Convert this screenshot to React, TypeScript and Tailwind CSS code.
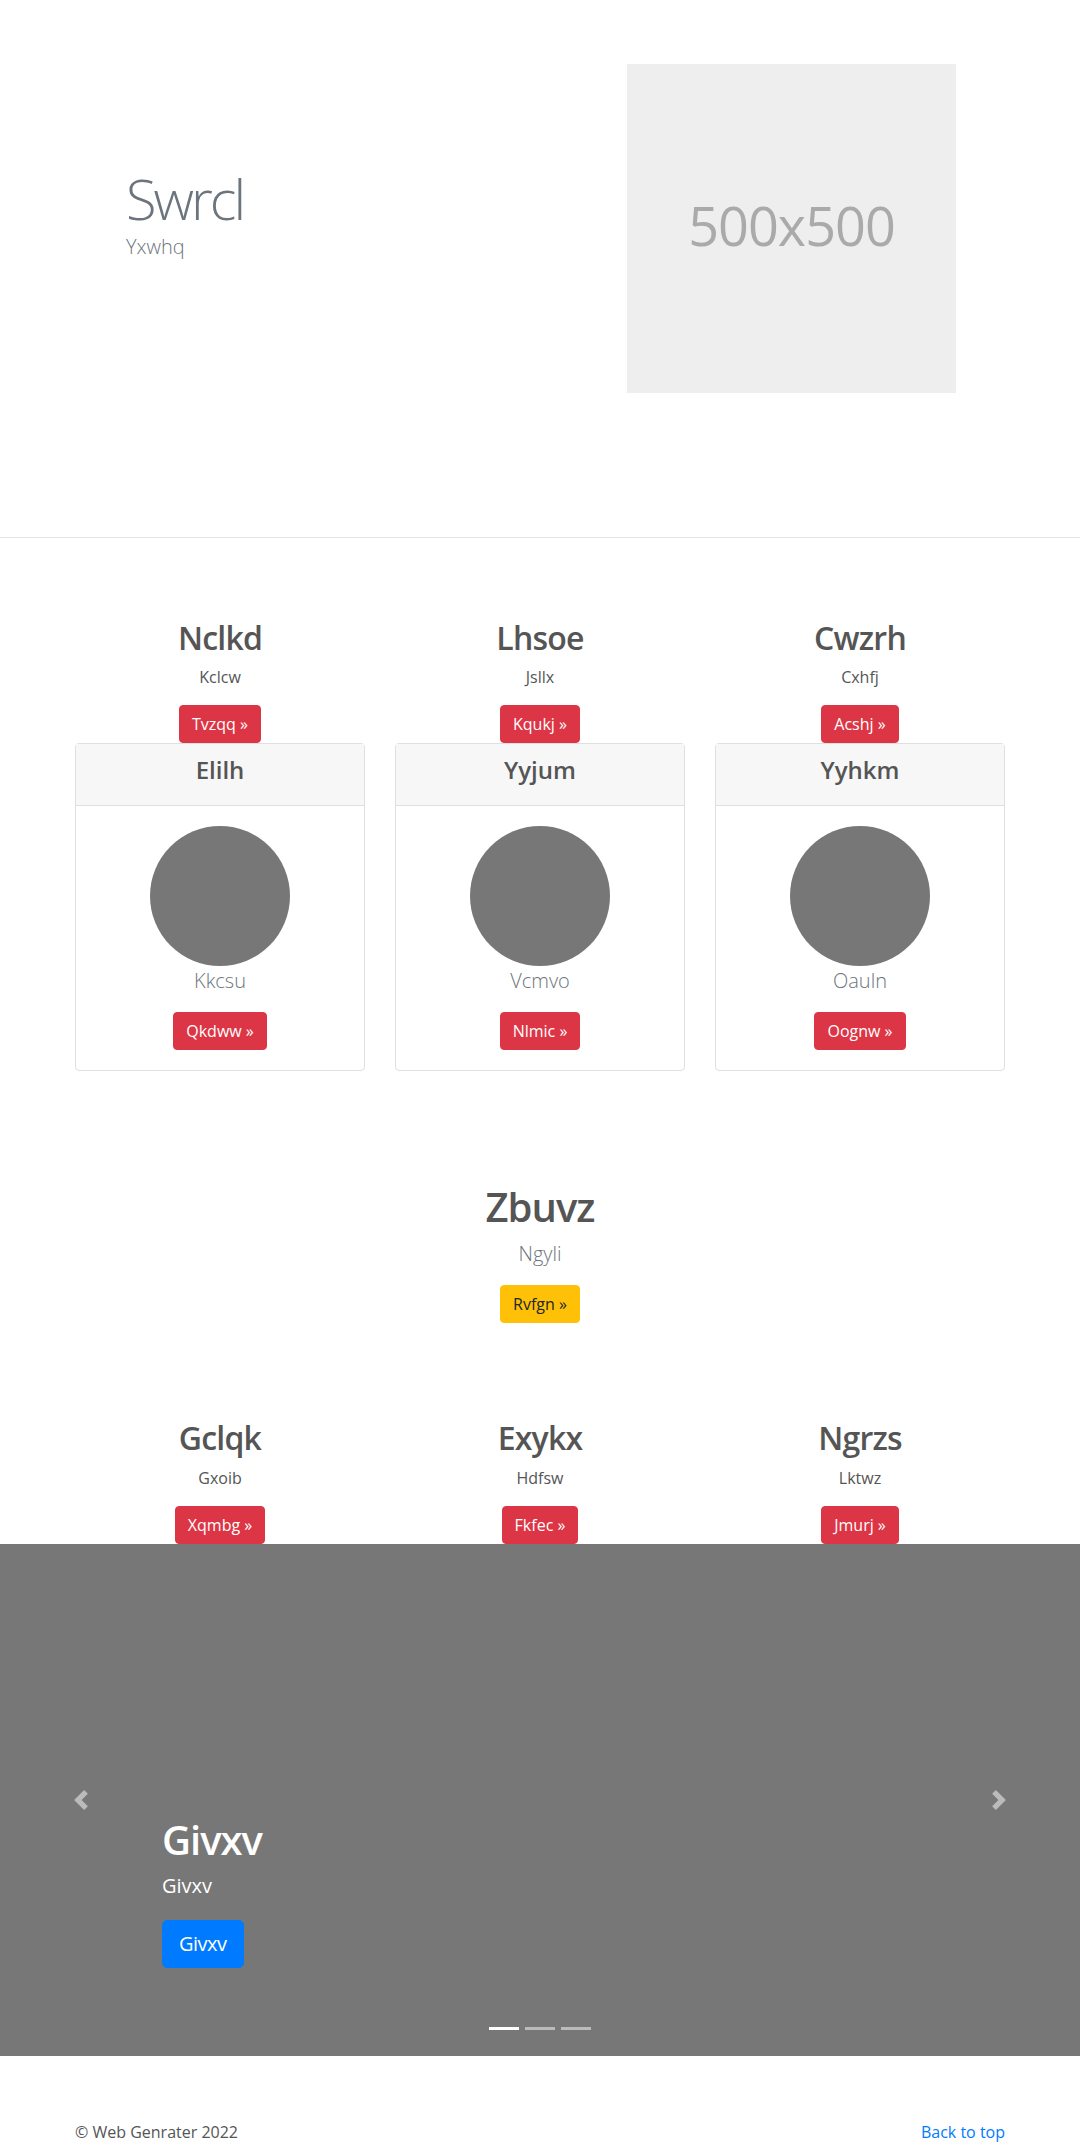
const topFeatures = [
  { title: 'Nclkd', text: 'Kclcw', btn: 'Tvzqq', card: 'Elilh', lead: 'Kkcsu', cardBtn: 'Qkdww' },
  { title: 'Lhsoe', text: 'Jsllx', btn: 'Kqukj', card: 'Yyjum', lead: 'Vcmvo', cardBtn: 'Nlmic' },
  { title: 'Cwzrh', text: 'Cxhfj', btn: 'Acshj', card: 'Yyhkm', lead: 'Oauln', cardBtn: 'Oognw' },
];

const bottomFeatures = [
  { title: 'Gclqk', text: 'Gxoib', btn: 'Xqmbg' },
  { title: 'Exykx', text: 'Hdfsw', btn: 'Fkfec' },
  { title: 'Ngrzs', text: 'Lktwz', btn: 'Jmurj' },
];

function RedButton({ label }: { label: string }) {
  return (
    <a
      href="#"
      className="inline-block rounded border border-[#dc3545] bg-[#dc3545] px-3 py-1.5 text-base leading-6 text-white"
    >
      {label} »
    </a>
  );
}

function Feature({ title, text, btn }: { title: string; text: string; btn: string }) {
  return (
    <div className="text-center">
      <h2 className="mb-2 text-[32px] font-semibold leading-[1.2] tracking-tight text-[#555]">{title}</h2>
      <p className="mb-4 text-base leading-6 text-[#555]">{text}</p>
      <div>
        <RedButton label={btn} />
      </div>
    </div>
  );
}

export default function App() {
  return (
    <div className="bg-white font-['Open_Sans','Noto_Sans',sans-serif] text-[#212529]">
      {/* Hero */}
      <section className="border-b border-[#e5e5e5] pt-16 pb-[144px]">
        <div className="mx-auto flex w-[930px] items-start">
          <div className="w-[552px] pl-[51px] pt-[101px]">
            <h1 className="text-[56px] font-light leading-[1.2] tracking-[-3px] text-[#6c757d]">Swrcl</h1>
            <p className="text-xl font-light leading-[1.5] text-[#6c757d]">Yxwhq</p>
          </div>
          <div className="flex h-[329px] w-[329px] items-center justify-center bg-[#eee] pb-2">
            <span className="text-[54px] leading-none tracking-[-1px] text-[#aaa]">500x500</span>
          </div>
        </div>
      </section>

      {/* Features with cards */}
      <section className="mx-auto grid w-[930px] grid-cols-3 gap-x-[30px] pt-[81px]">
        {topFeatures.map((f) => (
          <div key={f.title}>
            <Feature title={f.title} text={f.text} btn={f.btn} />
            <div className="rounded border border-[#dfdfdf] text-center">
              <div className="border-b border-[#dfdfdf] bg-[#f7f7f7] px-5 pt-3 pb-5">
                <h4 className="text-2xl font-semibold leading-[1.2] text-[#555]">{f.card}</h4>
              </div>
              <div className="p-5">
                <div className="mx-auto h-[140px] w-[140px] rounded-full bg-[#777]" />
                <p className="mb-4 text-xl font-light leading-[1.5] text-[#6c757d]">{f.lead}</p>
                <RedButton label={f.cardBtn} />
              </div>
            </div>
          </div>
        ))}
      </section>

      {/* Centered call to action */}
      <section className="pt-[112px] text-center">
        <h1 className="mb-2 text-[40px] font-semibold leading-[1.2] tracking-tight text-[#555]">Zbuvz</h1>
        <p className="mb-4 text-xl font-light leading-[1.5] text-[#6c757d]">Ngyli</p>
        <a
          href="#"
          className="inline-block rounded border border-[#ffc107] bg-[#ffc107] px-3 py-1.5 text-base leading-6 text-[#212529]"
        >
          Rvfgn »
        </a>
      </section>

      {/* Second feature row */}
      <section className="mx-auto grid w-[930px] grid-cols-3 gap-x-[30px] pt-24">
        {bottomFeatures.map((f) => (
          <Feature key={f.title} title={f.title} text={f.text} btn={f.btn} />
        ))}
      </section>

      {/* Carousel */}
      <section className="relative h-[512px] bg-[#777]">
        <a href="#" className="absolute inset-y-0 left-0 flex w-[15%] items-center justify-center opacity-50">
          <svg width="20" height="20" viewBox="0 0 8 8" fill="#fff">
            <path d="M5.25 0l-4 4 4 4 1.5-1.5L4.25 4l2.5-2.5L5.25 0z" />
          </svg>
        </a>
        <a href="#" className="absolute inset-y-0 right-0 flex w-[15%] items-center justify-center opacity-50">
          <svg width="20" height="20" viewBox="0 0 8 8" fill="#fff">
            <path d="M2.75 0l-1.5 1.5L3.75 4l-2.5 2.5L2.75 8l4-4-4-4z" />
          </svg>
        </a>

        <div className="absolute left-[15%] right-[15%] bottom-12 py-5 text-left text-white">
          <h1 className="mb-2 text-[40px] font-semibold leading-[1.2] tracking-tight">Givxv</h1>
          <p className="mb-5 text-xl leading-[1.4]">Givxv</p>
          <div className="mb-5">
            <a
              href="#"
              className="inline-block rounded-[5px] border border-[#007bff] bg-[#007bff] px-4 py-2 text-xl leading-[1.5] tracking-tight text-white"
            >
              Givxv
            </a>
          </div>
        </div>

        <div className="absolute inset-x-0 bottom-[26px] flex justify-center gap-1.5">
          <span className="h-[3px] w-[30px] bg-white" />
          <span className="h-[3px] w-[30px] bg-white opacity-50" />
          <span className="h-[3px] w-[30px] bg-white opacity-50" />
        </div>
      </section>

      {/* Footer */}
      <footer className="mx-auto flex w-[930px] justify-between pt-16">
        <p className="mb-4 text-base leading-6 text-[#555]">© Web Genrater 2022</p>
        <a href="#" className="text-base leading-6 text-[#007bff]">
          Back to top
        </a>
      </footer>
    </div>
  );
}
